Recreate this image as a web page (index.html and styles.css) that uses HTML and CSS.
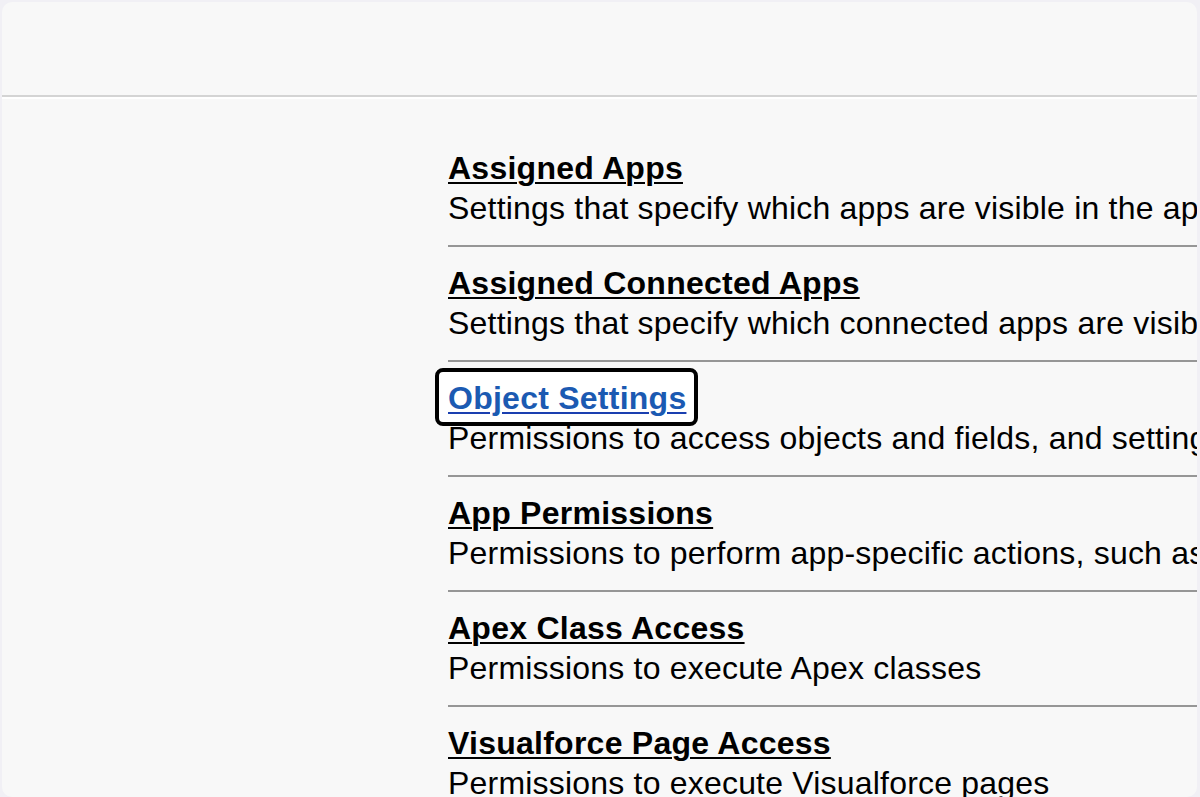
FILE: index.html
```html
<!DOCTYPE html>
<html>
<head>
<meta charset="utf-8">
<link rel="stylesheet" href="styles.css">
</head>
<body>
<div class="panel">
  <div class="header"></div>
  <div class="content">
    <div class="item">
      <a class="title">Assigned Apps</a>
      <div class="desc">Settings that specify which apps are visible in the app menu</div>
    </div>
    <div class="item">
      <a class="title">Assigned Connected Apps</a>
      <div class="desc">Settings that specify which connected apps are visible in the App Launcher</div>
    </div>
    <div class="item">
      <span class="hl"><a class="title link">Object Settings</a></span>
      <div class="desc">Permissions to access objects and fields, and settings such as tab availability</div>
    </div>
    <div class="item">
      <a class="title">App Permissions</a>
      <div class="desc">Permissions to perform app-specific actions, such as "Manage Call Centers"</div>
    </div>
    <div class="item">
      <a class="title">Apex Class Access</a>
      <div class="desc">Permissions to execute Apex classes</div>
    </div>
    <div class="item">
      <a class="title">Visualforce Page Access</a>
      <div class="desc">Permissions to execute Visualforce pages</div>
    </div>
  </div>
</div>
</body>
</html>
```

FILE: styles.css
```css
html, body {
  margin: 0;
  padding: 0;
  height: 100%;
}
body {
  background: #f1f0f5;
  font-family: "Liberation Sans", Arial, sans-serif;
  color: #000;
  overflow: hidden;
}
.panel {
  margin: 2px 3px 0 2px;
  height: 795px;
  background: #f8f8f8;
  border-radius: 10px;
  overflow: hidden;
}
.header {
  height: 93px;
  border-bottom: 2px solid #d4d4d4;
  box-shadow: 0 2px 0 #ffffff;
}
.content {
  padding: 35px 0 0 446px;
  white-space: nowrap;
}
.item {
  padding: 16px 0 17px;
  border-bottom: 2px solid #969696;
}
.title {
  display: block;
  font-size: 32px;
  font-weight: bold;
  line-height: 40px;
  letter-spacing: 0.25px;
  color: #000;
  text-decoration: underline;
  text-decoration-thickness: 2px;
  text-underline-offset: 3px;
}
.desc {
  font-size: 32px;
  line-height: 40px;
  letter-spacing: 0.2px;
}
.hl {
  display: inline-block;
  vertical-align: top;
  border: 4px solid #000;
  border-radius: 8px;
  background: #ffffff;
  padding: 6px 8px 4px 9px;
  margin: -10px -12px -8px -13px;
}
.title.link {
  color: #1b5ab2;
  text-decoration-color: #1a3fb0;
}
```
